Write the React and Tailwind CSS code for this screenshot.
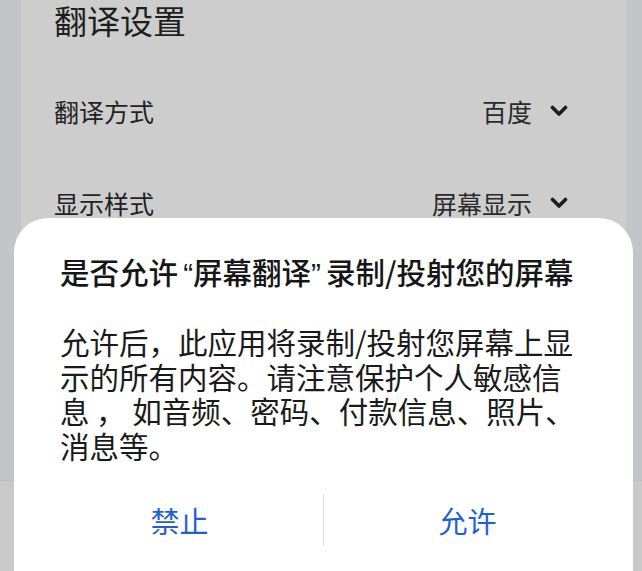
import React from 'react';

const cjk = { fontFamily: '"Noto Sans CJK SC", "Noto Sans", sans-serif' };
const latin = { fontFamily: '"Liberation Sans", sans-serif' };

function Chevron() {
  return (
    <svg width="18" height="12" viewBox="0 0 18 12" className="shrink-0">
      <path d="M2.5 2.5 L9 9 L15.5 2.5" fill="none" stroke="#1c1c1c" strokeWidth="3.6" strokeLinecap="round" strokeLinejoin="round" />
    </svg>
  );
}

function SettingRow({ label, value }) {
  return (
    <div className="flex items-center justify-between h-[92px]">
      <span className="text-[25px] leading-none text-[#222]">{label}</span>
      <div className="flex items-center gap-[18px]">
        <span className="text-[25px] leading-none text-[#2a2a2a]">{value}</span>
        <Chevron />
      </div>
    </div>
  );
}

export default function App() {
  const lines = [
    '允许后，此应用将录制/投射您屏幕上显',
    '示的所有内容。请注意保护个人敏感信',
    '息 ， 如音频、密码、付款信息、照片、',
    '消息等。',
  ];

  return (
    <div className="relative w-[642px] h-[571px] overflow-hidden bg-[#c3c5c8]" style={cjk}>
      {/* dimmed settings page behind the dialog */}
      <div className="flex flex-col h-full">
        <div className="ml-[21px] mr-[16px] h-[480px] bg-[#cdcdcd] pl-[33px] pr-[58px]">
          <div className="pt-[2px] text-[33px] leading-[36px] text-[#1e1e1e]">翻译设置</div>
          <div className="mt-[27px]">
            <SettingRow label="翻译方式" value="百度" />
            <SettingRow label="显示样式" value="屏幕显示" />
          </div>
        </div>
        <div className="flex-1 bg-[#c9c9c9] border-t border-[#bcbcbc]" />
      </div>

      {/* screen capture permission dialog */}
      <div className="absolute left-[14px] top-[218px] w-[619px] h-[390px] rounded-[34px] bg-white">
        <div className="px-[46px] pt-[36px]">
          <div className="text-[29.5px] leading-[34px] font-medium text-[#161616] whitespace-nowrap">
            是否允许<span className="inline-block w-[15px] text-right" style={latin}>“</span>屏幕翻译<span className="inline-block w-[15px] text-left" style={latin}>”</span>录制/投射您的屏幕
          </div>
          <div className="mt-[33px] text-[29.5px] leading-[34.5px] text-[#1a1a1a]">
            {lines.map((l) => (
              <div key={l} className="whitespace-nowrap">{l}</div>
            ))}
          </div>
        </div>
        <div className="mt-[31px] px-[22px] flex items-center h-[54px]">
          <button className="flex-1 text-[29px] leading-none text-[#1f5fd6]">禁止</button>
          <div className="w-px h-[52px] bg-[#e2e2e2]" />
          <button className="flex-1 text-[29px] leading-none text-[#1f5fd6]">允许</button>
        </div>
      </div>
    </div>
  );
}
